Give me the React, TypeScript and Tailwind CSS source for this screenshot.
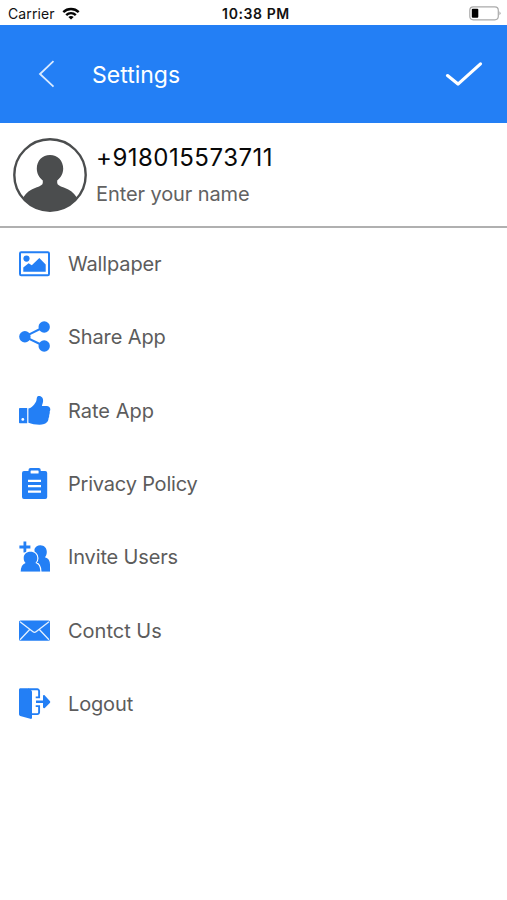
import type { ReactNode } from "react";

const BLUE = "#237ff5";

function Icon({ children }: { children: ReactNode }) {
  return (
    <svg viewBox="0 0 32 32" className="h-8 w-8 shrink-0 overflow-visible" fill={BLUE}>
      {children}
    </svg>
  );
}

const items: { label: string; spacing: string; icon: ReactNode }[] = [
  {
    label: "Wallpaper",
    spacing: "tracking-[-0.15px]",
    icon: (
      <>
        <rect x="2" y="4.3" width="29" height="23" rx="1.2" fill="none" stroke={BLUE} strokeWidth="2" />
        <circle cx="8.5" cy="10.6" r="3.1" />
        <path d="M5.3 23.8v-4.2l5.3-4.4 3.2 2 7.5-7.2 6.4 6.4v7.4z" />
      </>
    ),
  },
  {
    label: "Share App",
    spacing: "tracking-[-0.1px]",
    icon: (
      <>
        <path d="M26 6 6.7 15.7 26 25" fill="none" stroke={BLUE} strokeWidth="2" />
        <circle cx="6.9" cy="15.7" r="5.7" />
        <circle cx="26.2" cy="6" r="5.7" />
        <circle cx="26.2" cy="25" r="5.7" />
      </>
    ),
  },
  {
    label: "Rate App",
    spacing: "tracking-normal",
    icon: (
      <>
        <path d="M1.8 13.1h7.4v15.2H1.8a.8.8 0 0 1-.8-.8V13.900a.8.8 0 0 1 .8-.8z" />
        <circle cx="4.8" cy="24.400" r="1.400" fill="#fff" />
        <path d="M10.400 13.600c2.600-.8 4.300-2.100 5.800-4.100 1.200-1.700 2-2.600 2.300-4.500.3-1.900.3-4.100 2.500-4.100 2.900 0 4.300 2.400 4.100 5-.2 2.100-.9 3.300-1.200 5.100h4.800c2.100 0 3.600 1.300 3.600 3.200 0 .9-.2 1.600-.6 2.300.2 1.200 0 2.500-.5 3.400.1 1.200-.1 2.400-.7 3.400 0 1.400-.4 2.700-1.400 3.700-1.600 1.800-4 2.700-7.600 2.700-4.100 0-8-.9-11.100-2z" />
      </>
    ),
  },
  {
    label: "Privacy Policy",
    spacing: "tracking-[-0.2px]",
    icon: (
      <>
        <path d="M12.500 0h8.200a2 2 0 0 1 2 2v1h4.500a2 2 0 0 1 2 2v24a2 2 0 0 1-2 2H6a2 2 0 0 1-2-2V5a2 2 0 0 1 2-2h4.500V2a2 2 0 0 1 2-2z" />
        <rect x="12.600" y="2.500" width="8" height="3" rx=".6" fill="#fff" />
        <path d="M10 12.800h13M10 18.200h13M10 23.600h13" stroke="#fff" strokeWidth="2.200" />
      </>
    ),
  },
  {
    label: "Invite Users",
    spacing: "tracking-[-0.15px]",
    icon: (
      <>
        <path d="M6.900.5v11M1.400 6h11" stroke={BLUE} strokeWidth="2.800" />
        <path d="M22.300 4.300c3.900 0 6.500 2.800 6.500 6.600 0 2.200-.7 4-1.900 5.300 3.600 1.100 5.100 3.500 5.100 7.200v7.300H16.500V8c1-2.300 3.100-3.700 5.800-3.700z" />
        <path
          d="M12.400 10.800c4.100 0 6.900 2.700 6.900 6.400 0 2-.7 3.500-1.900 4.700 3.400 1.100 4.900 4.200 4.900 8.800H2.700c0-4.600 1.600-7.700 4.900-8.800-1.200-1.200-1.900-2.700-1.900-4.700 0-3.700 2.700-6.400 6.700-6.400z"
          stroke="#fff"
          strokeWidth="2.400"
          paintOrder="stroke"
        />
        <path d="M0 30.700h33v3H0z" fill="#fff" />
      </>
    ),
  },
  {
    label: "Contct Us",
    spacing: "tracking-normal",
    icon: (
      <>
        <rect x="1" y="5.400" width="31" height="20.400" rx="1.500" />
        <path d="m2 6.700 13 10.100q1.500 1.200 3 0L31 6.700M2 24.800l9.700-10.300M31 24.800l-9.700-10.300" fill="none" stroke="#e4f1ff" strokeWidth="1.300" />
      </>
    ),
  },
  {
    label: "Logout",
    spacing: "tracking-[-0.15px]",
    icon: (
      <>
        <path d="M10 1.300h9.300a1.800 1.800 0 0 1 1.800 1.800v6.300h-3.400M17.700 18.100h3.400v6.200a1.800 1.800 0 0 1-1.800 1.800H13" fill="none" stroke={BLUE} strokeWidth="1.900" />
        <path d="M2.500.3h7.200l2.800 1.500c1 .5 1.500 1.300 1.500 2.400v25.500c0 1-.8 1.400-1.700 1.100L2.200 28c-.8-.3-1.200-.9-1.200-1.700V1.800C1 .9 1.600.3 2.500.3z" />
        <path d="M18 12.600h7V8.200c0-1.200 1-1.500 1.800-.8l5 5.500c.6.700.6 1.300 0 2l-5 5c-.8.700-1.800.4-1.800-.8v-4.200h-7z" />
      </>
    ),
  },
];

function StatusBar() {
  return (
    <div className="grid h-[25px] grid-cols-3 items-center pt-0.5 pr-1.5 pl-2 text-[#111]">
      <div className="flex items-center gap-[7px]">
        <span className="text-[14px] tracking-[0.1px]">Carrier</span>
        <svg viewBox="0 0 18 13" className="h-[13px] w-[18px]" fill="none" stroke="#050505" strokeWidth="2.400">
          <path d="M1.300 5.100c4.300-4.200 11.100-4.200 15.400 0M4.200 8.100c2.700-2.600 6.900-2.600 9.600 0" />
          <path d="M9 12.500 6.300 9.900q2.700-2 5.400 0z" fill="#050505" stroke="none" />
        </svg>
      </div>
      <span className="ml-[3px] text-center text-[14px] font-semibold tracking-[0.6px] whitespace-nowrap">10:38 PM</span>
      <svg viewBox="0 0 33 15" className="h-[15px] w-[33px] justify-self-end" fill="none">
        <rect x="1.800" y=".8" width="28.500" height="13" rx="3.500" stroke="#aaa" strokeWidth="1.200" />
        <rect x="3.800" y="2.800" width="6.500" height="9" rx="1" fill="#000" />
        <path d="M31.500 5.300q2 2 0 4z" fill="#999" />
      </svg>
    </div>
  );
}

function Header() {
  return (
    <header className="flex h-[98px] items-center bg-[#237ff5] pr-6 pl-[38px] text-white">
      <svg viewBox="0 0 17 28" className="h-7 w-[17px]" fill="none" stroke="#d9eaff" strokeWidth="1.800">
        <path d="M15.500 1.200 2 14l13.500 12.700" />
      </svg>
      <h1 className="ml-[37px] flex-1 pt-0.5 text-[23px] leading-7">Settings</h1>
      <svg viewBox="0 0 38 26" className="h-[26px] w-[38px]" fill="none" stroke="#fff" strokeWidth="3.200" strokeLinecap="round" strokeLinejoin="round">
        <path d="m2.500 14.600 10.500 8.500L35.500 2.900" />
      </svg>
    </header>
  );
}

function Profile() {
  return (
    <section className="flex h-[105px] border-b-2 border-[#b0b0b0] pt-[15px] pl-3">
      <svg viewBox="0 0 76 76" className="h-[76px] w-[76px]">
        <clipPath id="avatar">
          <circle cx="38" cy="37" r="36" />
        </clipPath>
        <circle cx="38" cy="37" r="35.700" fill="#fff" stroke="#4b4d4e" strokeWidth="2.400" />
        <g fill="#4b4d4e" clipPath="url(#avatar)">
          <path d="M38 17c7.700 0 13.200 5.800 13.200 13.600 0 5-2.300 9.200-6 11.800v2.400c0 2.200 2.200 3.200 6.600 4.700 5.800 2 9.700 5 12.900 9.700V76H11.300V59.200c3.200-4.700 7.100-7.700 12.900-9.700 4.400-1.500 6.600-2.500 6.600-4.700v-2.400c-3.700-2.600-6-6.800-6-11.800C24.800 22.800 30.300 17 38 17z" />
        </g>
      </svg>
      <div className="ml-2 pt-1">
        <p className="text-[24px] leading-8 tracking-[0.5px] text-[#080808]">+918015573711</p>
        <p className="mt-1 text-[20px] leading-8 tracking-[-0.1px] text-[#626262]">Enter your name</p>
      </div>
    </section>
  );
}

export default function App() {
  return (
    <main className="h-[900px] w-[507px] overflow-hidden bg-white font-['Inter','Liberation_Sans',sans-serif]">
      <StatusBar />
      <Header />
      <Profile />
      <ul className="-mt-[0.600px]">
        {items.map(({ label, spacing, icon }) => (
          <li key={label} className="flex h-[73.350px] items-center gap-[18px] pl-[18px]">
            <Icon>{icon}</Icon>
            <span className={`text-[20px] leading-7 text-[#5c5c5c] ${spacing}`}>{label}</span>
          </li>
        ))}
      </ul>
    </main>
  );
}
